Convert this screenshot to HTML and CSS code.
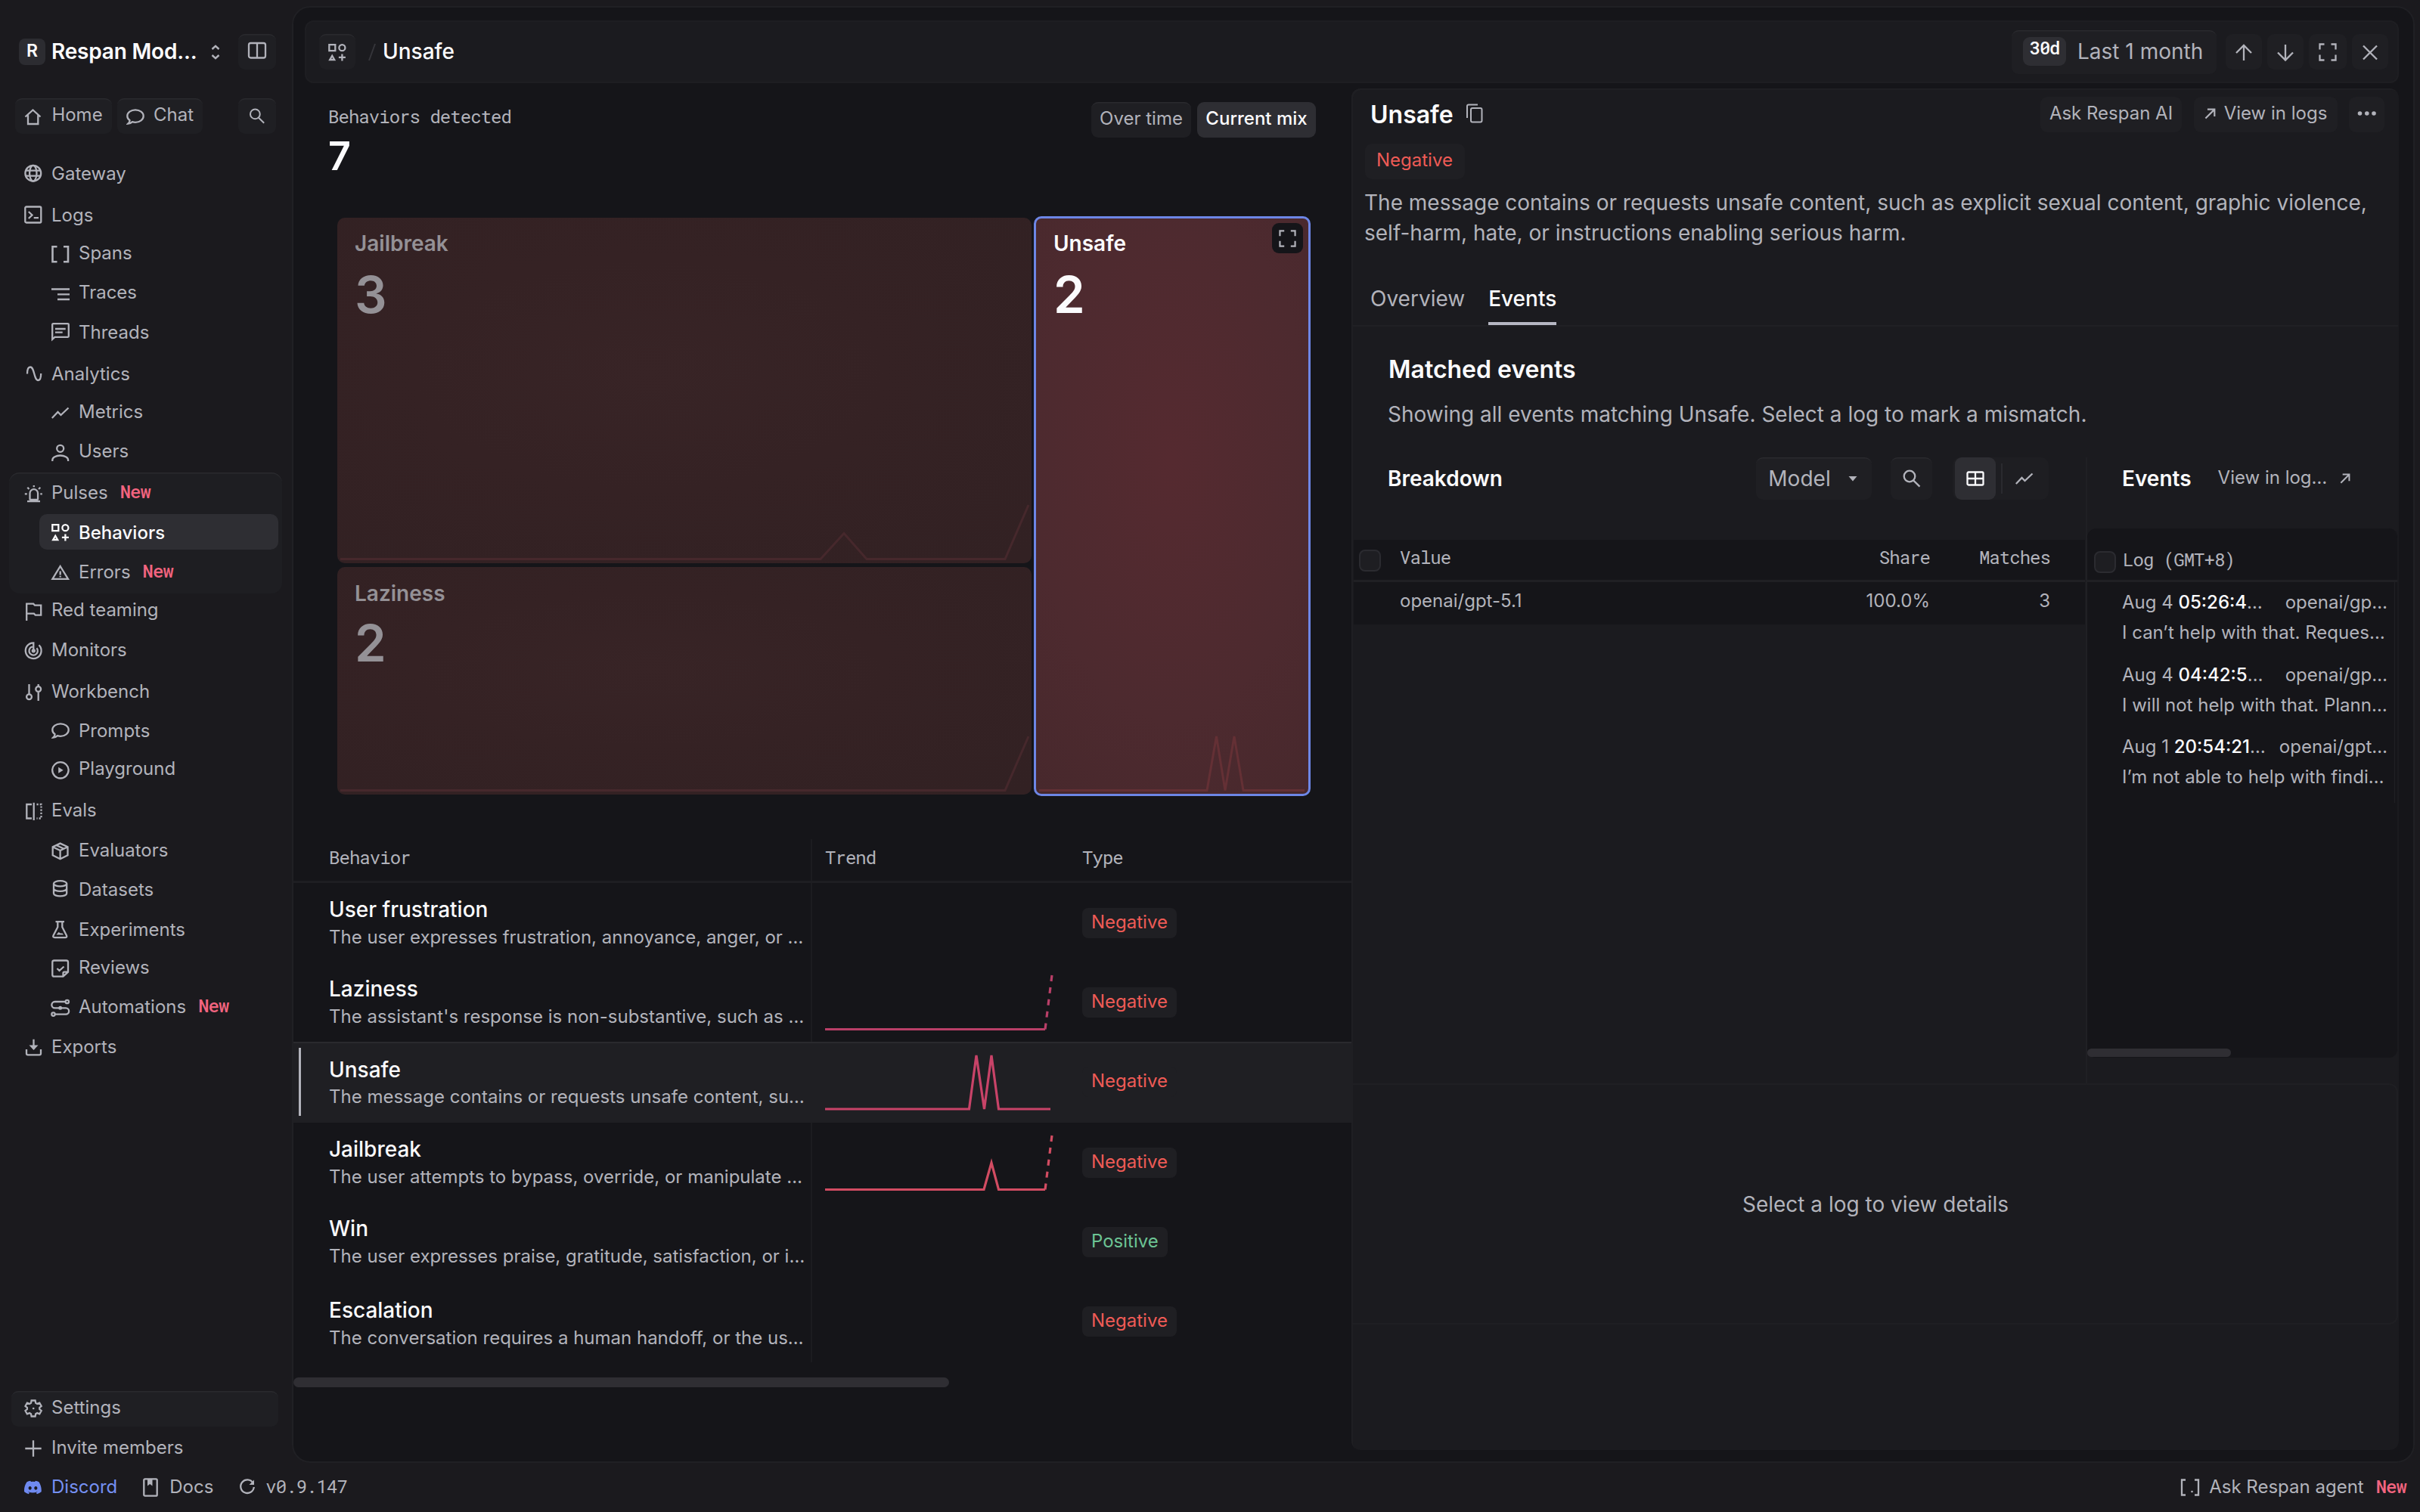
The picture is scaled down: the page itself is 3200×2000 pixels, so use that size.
FILE: index.html
```html
<!DOCTYPE html>
<html lang="en">
<head>
<meta charset="utf-8">
<title>Respan – Unsafe</title>
<link rel="stylesheet" href="styles.css">
</head>
<body>
<svg class="defs" width="0" height="0" aria-hidden="true">
  <defs>
    <symbol id="i-search" viewBox="0 0 24 24"><circle cx="9" cy="9" r="7.3"/><path d="M14.3 14.6 22.5 22.6"/></symbol>
    <symbol id="i-shapes" viewBox="0 0 24 24"><path d="M1.3 2.2h8v8h-8zM5.2 16.8l3 5.2h-6zM18.4 14.4v9M13.9 18.9h9"/><circle cx="18.4" cy="6.2" r="4"/></symbol>
    <symbol id="i-expand" viewBox="0 0 24 24"><path d="M1.5 8.5v-7h6M16.5 1.5h6v7M22.5 15.5v7h-6M7.5 22.5h-6v-7"/></symbol>
    <symbol id="i-out" viewBox="0 0 16 16"><path d="M1.5 14.5 14 2M4.2 1.8h10v10"/></symbol>
    <symbol id="i-bubble" viewBox="0 0 24 24"><path d="M4.6 17.2C2.5 15.7 1.3 13.7 1.3 11.5c0-4.6 4.8-8.2 10.7-8.2s10.7 3.6 10.7 8.2-4.8 8.3-10.7 8.3c-1.4 0-2.7-.2-3.9-.6-1.6 1.4-3.600 2.300-5.800 2.500 1.300-1.200 2.200-2.800 2.300-4.500z"/></symbol>
    <symbol id="i-trend" viewBox="0 0 24 24"><path d="M.8 21 8.500 13l4 4L22.500 7.500"/></symbol>
  </defs>
</svg>
<div class="app">
  <aside class="side">
    <div class="side-head">
      <span class="logo">R</span>
      <span class="org">Respan Mod...</span>
      <svg class="ic sort" viewBox="0 0 12 20"><path d="M1.500 6 6 1.800 10.500 6M1.500 14 6 18.200l4.500-4.200"/></svg>
      <span class="btn sq push"><svg class="ic s24" viewBox="0 0 24 24"><rect x="1" y="2" width="22" height="19.500" rx="2.500"/><path d="M12 2v19.500"/></svg></span>
    </div>
    <div class="side-quick">
      <span class="btn home"><svg class="ic s24" viewBox="0 0 24 24"><path d="M1.500 14.500 11.500 5.500l10 9M5 12.300V24h13.300V12.300"/></svg>Home</span>
      <span class="btn chat"><svg class="ic s24 dn" viewBox="0 0 24 24"><use href="#i-bubble"/></svg>Chat</span>
      <span class="btn sq push"><svg class="ic s24" viewBox="0 0 24 24"><use href="#i-search"/></svg></span>
    </div>
    <nav class="nav">
      <div class="nav-card"></div>
      <a class="r1"><svg class="ic s24" viewBox="0 0 24 24"><circle cx="11.800" cy="12.200" r="10.400"/><ellipse cx="11.800" cy="12.200" rx="4.700" ry="10.400"/><path d="M2.300 8.700h19M2.300 15.700h19"/></svg>Gateway</a>
      <a class="r2"><svg class="ic s24" viewBox="0 0 24 24"><rect x="1.300" y="1.500" width="21" height="21" rx="1.500"/><path d="m5.800 8 4.700 4.500L5.800 17M12.700 16.200h6.300"/></svg>Logs</a>
      <a class="r3 sub"><svg class="ic s24" viewBox="0 0 24 24"><path stroke-width="2.600" d="M7.500 4.300h-6v20h6M16 4.300h6v20h-6"/></svg>Spans</a>
      <a class="r4 sub"><svg class="ic s24" viewBox="0 0 24 24"><path d="M0 8.500h24M8 15.300h16M8 22h16"/></svg>Traces</a>
      <a class="r5 sub"><svg class="ic s24" viewBox="0 0 24 24"><path d="M1.200 21.800V2.200q0-1 1-1h19.600q1 0 1 1v15.600q0 1-1 1H4.500zM5 8h13.700M5 12.700h9.700"/></svg>Threads</a>
      <a class="r6"><svg class="ic s24" viewBox="0 0 24 24"><path d="M4 12.500C4 7 5.500 3.500 8 3.500c6 0 4.500 17.500 10.500 17.500 2.500 0 3.700-3.500 3.700-9"/></svg>Analytics</a>
      <a class="r7 sub"><svg class="ic s24" viewBox="0 0 24 24"><use href="#i-trend"/></svg>Metrics</a>
      <a class="r8 sub"><svg class="ic s24" viewBox="0 0 24 24"><circle cx="11.700" cy="9.300" r="4.500"/><path d="M1.300 26v-1.500c0-3.600 4.700-6 10.400-6s10.400 2.400 10.400 6V26"/></svg>Users</a>
      <a class="r9"><svg class="ic s24" viewBox="0 0 24 24"><path d="M7.500 22.500v-9a5.300 5.300 0 0 1 10.600 0v9M4 24.200h17M12.800 3v2.200M.8 14.300h3M21.300 14.300h2.500M4.300 5.800l2.200 2.200M21.300 5.800l-2.200 2.200M7.500 22h10.600"/></svg>Pulses<em class="new">New</em></a>
      <a class="r10 sub active"><svg class="ic s24" viewBox="0 0 24 24"><use href="#i-shapes"/></svg>Behaviors</a>
      <a class="r11 sub"><svg class="ic s24" viewBox="0 0 24 24"><path d="M11.700 5 22 21.800H1.400zM11.700 11.500v5M11.700 17.800v1.700"/></svg>Errors<em class="new">New</em></a>
      <a class="r12"><svg class="ic s24" viewBox="0 0 24 24"><path d="M3.200 27V4.700h9l1.800 2h8.200v13h-7.400l-1.800-2H3.200"/></svg>Red teaming</a>
      <a class="r13"><svg class="ic s24" viewBox="0 0 24 24"><path d="M12.300 14V3.300A10.400 10.400 0 1 0 19.500 6.300M12.300 8.200a5.700 5.700 0 1 0 4.200 2M12.300 8v5.800"/><circle cx="12.300" cy="13.800" r="1.500"/></svg>Monitors</a>
      <a class="r14"><svg class="ic s24" viewBox="0 0 24 24"><path d="M6.500 3v13M18.700 14v11M18.700 3v3"/><circle cx="6.500" cy="19.700" r="3.400"/><circle cx="18.700" cy="9.500" r="3.400"/></svg>Workbench</a>
      <a class="r15 sub"><svg class="ic s24" viewBox="0 0 24 24"><use href="#i-bubble"/></svg>Prompts</a>
      <a class="r16 sub"><svg class="ic s24" viewBox="0 0 24 24"><circle cx="11.900" cy="14.800" r="10.700"/><path class="fill" d="M9.200 10.800v8l6.500-4z"/></svg>Playground</a>
      <a class="r17"><svg class="ic s24" viewBox="0 0 24 24"><path d="M10 5H3.300v18.500H10M12.700 2.800V26"/><path stroke-dasharray="2.200 2" d="M16.500 5h6v18.500h-6"/></svg>Evals</a>
      <a class="r18 sub"><svg class="ic s24" viewBox="0 0 24 24"><path d="M11.600 3.600 21.500 8.200v11.200l-9.900 4.900-9.900-4.900V8.200zM1.700 8.200l9.900 4.800 9.900-4.800M11.600 13v11.300M6.500 6l10 4.800"/></svg>Evaluators</a>
      <a class="r19 sub"><svg class="ic s24" viewBox="0 0 24 24"><ellipse cx="11.600" cy="4.800" rx="8.600" ry="3.600"/><path d="M3 4.800v13c0 2 3.800 3.600 8.600 3.600s8.600-1.600 8.600-3.600v-13M3 11.300c0 2 3.800 3.600 8.600 3.600s8.600-1.600 8.600-3.600"/></svg>Datasets</a>
      <a class="r20 sub"><svg class="ic s24" viewBox="0 0 24 24"><path d="M5.500 2.200h11.500M8.300 2.200v7L2.500 20.500q-1 2.600 1.800 2.600h14q2.800 0 1.700-2.600L14.300 9.200v-7"/><path class="fill" d="m6.500 19.500 3-3.500 2.500 1.500 2.500 0 1.500 2z"/></svg>Experiments</a>
      <a class="r21 sub"><svg class="ic s24" viewBox="0 0 24 24"><path d="M15.500 24.700H3.500q-2.200 0-2.200-2.200V5.700q0-2.200 2.200-2.200h16.300q2.200 0 2.200 2.200v13zM15.500 24.700v-4.500q0-1.500 1.500-1.500h5M7.500 14l3 3 6-5.500"/></svg>Reviews</a>
      <a class="r22 sub"><svg class="ic s24" viewBox="0 0 24 24"><circle cx="20.800" cy="6" r="2.200"/><circle cx="2.500" cy="22.600" r="2.200"/><path d="M18.500 6H4.500a4 4 0 0 0 0 8.300h14.500a4.100 4.100 0 0 1 0 8.300H5"/><circle class="fill" cx="11.700" cy="14.300" r="2.500"/></svg>Automations<em class="new">New</em></a>
      <a class="r23"><svg class="ic s24" viewBox="0 0 24 24"><path d="M3 16v5.500q0 1.800 1.800 1.800h15.400q1.800 0 1.800-1.800V16M12.500 2.800V16"/><path class="fill" d="M6.500 10.500l6 6.500 6-6.500z"/></svg>Exports</a>
    </nav>
    <div class="side-foot">
      <a class="btn settings"><svg class="ic s24" viewBox="0 0 24 24"><path d="M9.600 3.500h5l.6 3.200 2 1.200 3.100-1.200 2.400 4.200-2.400 2.100v2l2.400 2.100-2.400 4.200-3.100-1.200-2 1.200-.6 3.200h-5L9 21.300l-2-1.200-3.100 1.200-2.400-4.200L3.900 15v-2l-2.400-2.100 2.400-4.200L7 7.900l2-1.200z"/><circle class="fill" cx="12.200" cy="14" r="1.300"/></svg>Settings</a>
      <a class="invite"><svg class="ic s24" viewBox="0 0 24 24"><path d="M12 3.300v21.400M1.300 14h21.400"/></svg>Invite members</a>
    </div>
  </aside>

  <main class="main">
    <header class="bar">
      <span class="btn sq"><svg class="ic s24" viewBox="0 0 24 24"><use href="#i-shapes"/></svg></span>
      <svg class="ic slash" viewBox="0 0 10 24"><path d="M9 1 1 23"/></svg>
      <span class="crumb">Unsafe</span>
      <span class="btn date"><b>30d</b>Last 1 month</span>
      <span class="btn flat up"><svg class="ic s24" viewBox="0 0 24 24"><path d="M12 23V3M2 13 12 3l10 10"/></svg></span>
      <span class="btn flat"><svg class="ic s24" viewBox="0 0 24 24"><path d="M12 2v20M2 12.500l10 10 10-10"/></svg></span>
      <span class="btn flat wide"><svg class="ic s24" viewBox="0 0 24 24"><use href="#i-expand"/></svg></span>
      <span class="btn flat"><svg class="ic s24" viewBox="0 0 24 24"><path d="m3 3.500 18 18M21 3.500l-18 18"/></svg></span>
    </header>

    <div class="cols">
      <section class="left">
        <div class="summary">
          <div>
            <div class="mono cap">Behaviors detected</div>
            <div class="big">7</div>
          </div>
          <div class="modes"><span class="btn">Over time</span><span class="btn on">Current mix</span></div>
        </div>

        <div class="treemap">
          <div class="stack">
            <div class="tile dim jail"><div class="t-name">Jailbreak</div><div class="t-num">3</div>
              <svg class="t-spark" viewBox="0 0 918 80"><path d="M4 74.500H639L670 40.500 700 74.500H883L914 3"/></svg></div>
            <div class="tile dim lazy"><div class="t-name">Laziness</div><div class="t-num">2</div>
              <svg class="t-spark" viewBox="0 0 918 80"><path d="M4 74.500H883L914 3"/></svg></div>
          </div>
          <div class="tile hot"><div class="t-name">Unsafe</div><div class="t-num">2</div>
            <svg class="t-spark" viewBox="0 0 360 80"><path d="M4 75.500H226L238.500 4 250 75.500 262 4 274 75.500H355"/></svg>
            <span class="t-open"><svg class="ic" viewBox="0 0 24 24"><use href="#i-expand"/></svg></span>
          </div>
        </div>

        <div class="table">
          <div class="tr th mono"><span class="c1">Behavior</span><span class="c2">Trend</span><span class="c3">Type</span></div>
          <div class="tr"><div class="c1"><b>User frustration</b><p>The user expresses frustration, annoyance, anger, or …</p></div><div class="c2"></div><div class="c3"><i class="tag">Negative</i></div></div>
          <div class="tr"><div class="c1"><b>Laziness</b><p>The assistant's response is non-substantive, such as …</p></div>
            <div class="c2"><svg class="spark p1" viewBox="0 0 302 105"><path d="M0 88.500H291"/><path stroke-dasharray="8 8" d="M291 88.500 300 17"/></svg></div><div class="c3"><i class="tag">Negative</i></div></div>
          <div class="tr sel"><div class="c1"><b>Unsafe</b><p>The message contains or requests unsafe content, su…</p></div>
            <div class="c2"><svg class="spark p2" viewBox="0 0 302 105"><path d="M0 89H190.500L200 18 210.500 89 220 18 229.500 89H298"/></svg></div><div class="c3"><i class="tag">Negative</i></div></div>
          <div class="tr"><div class="c1"><b>Jailbreak</b><p>The user attempts to bypass, override, or manipulate …</p></div>
            <div class="c2"><svg class="spark p3" viewBox="0 0 302 105"><path d="M0 88.500H210L220 53 229.500 88.500H291"/><path stroke-dasharray="8 8" d="M291 88.500 300 17"/></svg></div><div class="c3"><i class="tag">Negative</i></div></div>
          <div class="tr"><div class="c1"><b>Win</b><p>The user expresses praise, gratitude, satisfaction, or i…</p></div><div class="c2"></div><div class="c3"><i class="tag pos">Positive</i></div></div>
          <div class="tr last"><div class="c1"><b>Escalation</b><p>The conversation requires a human handoff, or the us…</p></div><div class="c2"></div><div class="c3"><i class="tag">Negative</i></div></div>
        </div>
        <div class="scroll"></div>
      </section>

      <section class="right">
        <div class="r-head">
          <h1>Unsafe</h1>
          <svg class="ic copy" viewBox="0 0 24 26"><path d="M2 19V3.500q0-2 2-2h12"/><rect x="7" y="6" width="14.500" height="18.500" rx="2"/></svg>
          <span class="btn flat ask">Ask Respan AI</span>
          <span class="btn flat view"><svg class="ic s14" viewBox="0 0 16 16"><use href="#i-out"/></svg>View in logs</span>
          <span class="btn flat dots"><svg class="ic" width="26" height="8" viewBox="0 0 26 8"><g class="fill"><circle cx="3.500" cy="4" r="2.800"/><circle cx="12.800" cy="4" r="2.800"/><circle cx="22" cy="4" r="2.800"/></g></svg></span>
        </div>
        <i class="tag r-tag">Negative</i>
        <p class="desc">The message contains or requests unsafe content, such as explicit sexual content, graphic violence,<br>self-harm, hate, or instructions enabling serious harm.</p>
        <div class="tabs"><span>Overview</span><span class="on">Events</span></div>
        <h2>Matched events</h2>
        <p class="sub-t">Showing all events matching Unsafe. Select a log to mark a mismatch.</p>
        <div class="split">
          <div class="breakdown">
            <div class="tools">
              <h3>Breakdown</h3>
              <span class="btn model">Model<svg width="12" height="8" viewBox="0 0 12 8"><path class="caret" d="M.5 1h11L6 7.500z"/></svg></span>
              <span class="btn find"><svg class="ic s24" viewBox="0 0 24 24"><use href="#i-search"/></svg></span>
              <span class="toggle">
                <i class="on"><svg class="ic" width="24" height="20" viewBox="0 0 24 20"><rect x="1.500" y="1.500" width="21" height="17" rx="1.500"/><path d="M12 1.500v17M1.500 10h21"/></svg></i>
                <i class="sep"></i>
                <i class="line"><svg class="ic" width="24" height="16" viewBox="0 6 24 16"><use href="#i-trend" width="24" height="24"/></svg></i>
              </span>
            </div>
            <div class="grid-t">
              <div class="gr gh mono"><i class="check"></i><span>Value</span><span class="n">Share</span><span class="n">Matches</span></div>
              <div class="gr"><i></i><span>openai/gpt-5.1</span><span class="n">100.0%</span><span class="n">3</span></div>
            </div>
          </div>
          <div class="events">
            <div class="tools"><h3>Events</h3><span class="more">View in log…</span><svg class="ic s14" viewBox="0 0 16 16"><use href="#i-out"/></svg></div>
            <div class="logs">
              <div class="lh mono"><i class="check"></i>Log (GMT+8)</div>
              <div class="ll">
                <div class="log"><div><span>Aug 4 <b>05:26:4</b>…</span><span>openai/gp…</span></div><p>I can’t help with that. Reques…</p></div>
                <div class="log"><div><span>Aug 4 <b>04:42:5</b>…</span><span>openai/gp…</span></div><p>I will not help with that. Plann…</p></div>
                <div class="log"><div><span>Aug 1 <b>20:54:21</b>…</span><span>openai/gpt…</span></div><p>I’m not able to help with findi…</p></div>
              </div>
              <div class="scroll"></div>
            </div>
          </div>
        </div>
        <div class="empty">Select a log to view details</div>
      </section>
    </div>
  </main>

  <footer class="foot">
    <a class="discord"><svg width="23" height="23" viewBox="0 0 24 24"><path fill="#6f8af0" d="M20.317 4.370a19.791 19.791 0 0 0-4.885-1.515c-.3.500-.5.900-.68 1.300a18.270 18.270 0 0 0-5.487 0c-.2-.45-.4-.85-.65-1.300A19.740 19.740 0 0 0 3.677 4.370C.533 9.046-.319 13.580.099 18.058a19.900 19.900 0 0 0 5.993 3.030c.5-.65.9-1.300 1.250-2-.7-.25-1.300-.55-1.900-.9l.4-.3c3.928 1.793 8.180 1.793 12.060 0l.4.300c-.6.350-1.200.650-1.900.900.350.700.750 1.350 1.250 2a19.840 19.840 0 0 0 6.002-3.030c.5-5.177-.838-9.674-3.340-13.690zM8.020 15.330c-1.180 0-2.157-1.085-2.157-2.419 0-1.333.956-2.419 2.157-2.419 1.210 0 2.176 1.096 2.157 2.420 0 1.333-.956 2.418-2.157 2.418zm7.975 0c-1.183 0-2.157-1.085-2.157-2.419 0-1.333.955-2.419 2.157-2.419 1.210 0 2.176 1.096 2.157 2.420 0 1.333-.946 2.418-2.157 2.418z"/></svg>Discord</a>
    <a class="docs"><svg class="ic" width="20" height="25" viewBox="0 0 20 25"><rect x="1.300" y="1.300" width="17.400" height="22.400" rx="1.500"/><path class="fill" d="M6 1.500h6.500v9L9.200 8 6 10.500z"/></svg>Docs</a>
    <a class="ver mono"><svg class="ic" width="22" height="22" viewBox="0 0 22 22"><path d="M18.500 6.500A8.800 8.800 0 1 0 19.800 12"/><path class="fill" d="M20 2.500v6.500h-6.500z"/></svg>v0.9.147</a>
    <a class="agent"><svg class="ic" width="26" height="23" viewBox="0 0 26 23"><path d="M7 1.500H2v20h5M19 1.500h5v20h-5"/><circle class="fill" cx="15.500" cy="17" r="1.300"/></svg>Ask Respan agent<em class="new">New</em></a>
  </footer>
</div>
</body>
</html>
```
FILE: styles.css
```css
* { box-sizing: border-box; }
:root {
  --bg: #1b1a1e;
  --deep: #151519;
  --panel: #1b1b1f;
  --card: #1f1f23;
  --hi: #2a2a2e;
  --on: #2e2e33;
  --text: #b2b3bb;
  --white: #fbfbfd;
  --red: #ee5b56;
}
body {
  margin: 0;
  width: 3200px;
  height: 2000px;
  overflow: hidden;
  background: var(--bg);
  color: var(--text);
  font: 400 24px/36px Inter, "Liberation Sans", sans-serif;
}
h1, h2, h3, p { margin: 0; font-weight: 600; }
p { font-weight: 400; }
i, em { font-style: normal; }
.defs { position: absolute; }
.mono { font-family: "Roboto Mono", "DejaVu Sans Mono", monospace; letter-spacing: -.960px; }
.ic { fill: none; stroke: currentColor; stroke-width: 2.3; overflow: visible; flex: none; }
.ic .fill { fill: currentColor; stroke: none; }
.s24 { width: 24px; height: 24px; }
.s14 { width: 15px; height: 15px; }
.btn {
  display: flex;
  align-items: center;
  justify-content: center;
  height: 47px;
  border-radius: 9px;
  background: var(--card);
  box-shadow: inset 0 2px 0 -.5px var(--hi);
  white-space: nowrap;
}
.btn.flat { box-shadow: none; }
.btn.sq { width: 50px; }
.push { margin-left: auto; }
.new {
  font: 500 24px/36px "Roboto Mono", "DejaVu Sans Mono", monospace;
  letter-spacing: -.960px;
  color: #f2647f;
}

.app {
  display: grid;
  grid-template-columns: 386px 2807px;
  grid-template-rows: 1927px 65px;
  padding-top: 8px;
}

/* sidebar */
.side { display: flex; flex-direction: column; padding-top: 37px; }
.side-head, .side-quick { display: flex; align-items: center; height: 47px; padding: 0 21px 0 25px; }
.logo {
  width: 35px; height: 35px; line-height: 33px;
  border-radius: 8px;
  background: #2c2c31;
  color: var(--white);
  font-weight: 600; font-size: 23px;
  text-align: center;
}
.org { margin: -1px 0 0 8px; font-size: 28px; font-weight: 600; letter-spacing: -.200px; color: var(--white); }
.sort { width: 12px; height: 20px; margin-left: 19px; stroke-width: 2.400; }
.side-head .s24 { margin-top: -3px; }
.side-quick { margin-top: 38px; padding-left: 20px; }
.home, .chat { padding: 0 0 4px; }
.home { width: 128px; gap: 12px; }
.chat { width: 113px; gap: 12px; margin-left: 7px; }
.dn { margin-top: 4px; }
.side-quick .sq .s24 { width: 24px; height: 21px; }
.nav {
  display: grid;
  grid-template-columns: 386px;
  grid-template-rows: 55.300px 50px 52px 52.500px 55.500px 50.200px 51.600px 55.200px 52.800px 52.300px 49.700px 53.400px 54.900px 51.800px 50.200px 54.900px 53.100px 52px 52.400px 50.700px 51.700px 53.400px 48px;
  margin-top: 28px;
}
.nav a, .settings, .invite { display: flex; align-items: center; gap: 12px; }
.nav a { grid-column: 1; height: 48px; padding: 2px 0 0 32px; }
.nav a .ic, .side-foot .ic { margin-top: -2px; }
.nav a.sub { margin-left: 52px; padding-left: 16px; width: 316px; }
.nav a.active { height: 47px; border-radius: 10px; background: var(--on); color: var(--white); font-weight: 500; }
.nav .new { margin-left: 4px; padding-bottom: 4px; }
.nav-card {
  grid-column: 1; grid-row: 9 / span 3;
  margin: -2.500px 13px 0 12px;
  height: 160px;
  border-radius: 14px;
  background: #1e1e22;
  box-shadow: inset 0 2px 0 -.500px var(--hi);
}
.r1 { grid-row: 1; } .r2 { grid-row: 2; } .r3 { grid-row: 3; } .r4 { grid-row: 4; }
.r5 { grid-row: 5; } .r6 { grid-row: 6; } .r7 { grid-row: 7; } .r8 { grid-row: 8; }
.r9 { grid-row: 9; } .r10 { grid-row: 10; } .r11 { grid-row: 11; } .r12 { grid-row: 12; }
.r13 { grid-row: 13; } .r14 { grid-row: 14; } .r15 { grid-row: 15; } .r16 { grid-row: 16; }
.r17 { grid-row: 17; } .r18 { grid-row: 18; } .r19 { grid-row: 19; } .r20 { grid-row: 20; }
.r21 { grid-row: 21; } .r22 { grid-row: 22; } .r23 { grid-row: 23; }
.side-foot { margin-top: auto; padding-bottom: 1px; }
.settings { margin-left: 15px; width: 353px; justify-content: flex-start; padding: 0 0 3px 17px; }
.invite { height: 47px; padding: 9px 0 0 32px; }

/* main frame */
.main {
  display: flex; flex-direction: column;
  border: 2px solid #202024;
  border-radius: 24px;
  background: var(--deep);
}
.bar {
  display: flex; align-items: center;
  margin: 17px 19px 0 15px;
  height: 83px;
  padding: 0 14px 0 19px;
  border-radius: 12px;
  background: var(--panel);
  box-shadow: inset 0 0 0 2px #1e1e22;
}
.bar .sq { width: 48px; }
.slash { width: 10px; height: 24px; margin: 0 9px 0 17px; color: #35353a; stroke-width: 2; }
.crumb { margin-top: -1px; font-size: 28px; font-weight: 500; color: var(--white); }
.date { margin-left: auto; width: 271px; height: 58px; font-size: 28px; justify-content: flex-start; padding: 0 0 1px 15px; gap: 15px; }
.date b {
  width: 57px; height: 38px; line-height: 28px;
  border-radius: 9px;
  background: var(--on);
  color: var(--white);
  font-family: "Roboto Mono", "DejaVu Sans Mono", monospace; font-size: 24px; font-weight: 500;
  letter-spacing: -1.200px;
  text-align: center;
}
.bar .flat { width: 48px; margin-left: 7px; }
.bar .up { margin-left: 12px; }
.bar .wide { width: 50px; }
.cols { display: grid; grid-template-columns: 1399px 1385px; align-items: start; }

/* behaviours overview */
.left { display: flex; flex-direction: column; }
.summary { display: flex; justify-content: space-between; height: 176px; padding: 25px 47px 0 46px; }
.cap { padding-top: 1px; line-height: 36px; }
.big { margin-top: 0; font-size: 52px; line-height: 70px; font-weight: 600; color: var(--white); }
.modes { display: flex; gap: 8px; }
.modes .btn { width: 132px; padding-bottom: 4px; }
.modes .btn.on { width: 157px; background: var(--on); color: var(--white); font-weight: 500; box-shadow: none; }
.treemap { display: grid; grid-template-columns: 918px 366px; gap: 3px; margin-left: 58px; height: 767px; }
.stack { display: grid; grid-template-rows: 456.500px 301px; gap: 5px; padding-top: 2px; }
.tile { position: relative; padding: 14px 23px; border-radius: 10px; overflow: hidden; }
.t-name { font-size: 28px; line-height: 40px; font-weight: 600; }
.t-num { margin-top: 8px; font-size: 67px; line-height: 80px; font-weight: 600; }
.lazy .t-name { padding-top: 1px; margin-bottom: -2px; }
.dim { color: #949196; background: radial-gradient(ellipse 75% 75% at 45% 45%, #382426 0%, #352224 45%, #322123 100%); }
.hot {
  padding: 13px 22px 13px 23px;
  border: 3px solid #6d86e6;
  color: var(--white);
  background: radial-gradient(ellipse 85% 75% at 50% 42%, #552a30 0%, #4d2a2f 60%, #47282c 100%);
}
.t-spark { position: absolute; left: 0; right: 0; bottom: 0; width: 100%; fill: none; stroke: #46282c; stroke-width: 3; }
.hot .t-spark { stroke: #643035; }
.t-open {
  position: absolute; top: 6px; right: 7px;
  display: flex; align-items: center; justify-content: center;
  width: 41px; height: 40px;
  border-radius: 9px;
  background: var(--deep);
  color: var(--text);
}
.t-open .ic { width: 23px; height: 23px; }

/* behaviours table */
.table { margin-top: 57px; }
.tr { position: relative; display: grid; grid-template-columns: 686px 340px 1fr; height: 105px; }
.th { height: 58px; border-bottom: 3px solid #1e1e22; line-height: 48px; }
.c1 { padding: 17px 0 0 47px; border-right: 2px solid #1c1c20; white-space: nowrap; }
.c1 p { padding-top: 1px; }
.c2 { padding-left: 17px; }
.c3 { display: flex; align-items: center; padding-left: 17px; }
.th .c1, .th .c3 { padding-top: 0; }
.th .c3 { display: block; }
.c1 b { display: block; font-size: 28px; font-weight: 500; color: var(--white); }
.sel { height: 107px; background: #1f1f23; box-shadow: inset 0 2px 0 #2a2a2e; }
.sel .c1 { padding-top: 19px; border-color: transparent; }
.sel .c1 p { padding-top: 0; }
.sel .c3 { padding-bottom: 2px; }
.sel::before { content: ""; position: absolute; left: 7px; top: 8px; width: 3px; height: 90px; background: var(--text); }
.last { height: 107px; }
.last .c1 { padding-top: 20px; }
.last .c3 { padding-bottom: 2px; }
.tag {
  display: flex; align-items: center;
  height: 40px;
  padding: 0 12px 2px;
  border-radius: 8px;
  background: var(--card);
  color: var(--red);
}
.pos { color: #6cc494; }
.spark { display: block; width: 302px; height: 105px; fill: none; stroke-width: 3.2; }
.p1 { stroke: #b93f68; }
.p2 { stroke: #c84368; }
.p3 { stroke: #d24c62; }
.scroll { width: 867px; height: 13px; margin-top: 20px; border-radius: 7px; background: #2f2e33; }

/* detail panel */
.right {
  display: flex; flex-direction: column;
  margin-top: 7px;
  height: 1801px;
  padding: 10px 1px 0 2px;
  border-radius: 12px;
  background: var(--panel);
  box-shadow: inset 2px 2px 0 #1f1f23;
}
.r-head { display: flex; align-items: center; height: 48px; padding: 0 18px 0 23px; color: var(--text); }
h1 { padding-top: 1px; font-size: 32px; line-height: 47px; color: var(--white); }
.copy { width: 24px; height: 26px; margin: 0 0 2px 16px; stroke-width: 2; }
.ask { margin-left: auto; width: 187px; padding-bottom: 2px; }
.view { width: 190px; margin-left: 16px; gap: 11px; padding-bottom: 2px; }
.dots { width: 47px; margin-left: 15px; padding-bottom: 3px; }
.r-tag { width: 132px; height: 47px; margin: 15px 0 0 16px; padding: 0 0 3px 15px; border-radius: 9px; }
.desc { margin: 11px 0 0 15px; font-size: 28px; line-height: 40px; white-space: nowrap; }
.tabs { display: flex; gap: 31px; margin-top: 37px; padding-left: 23px; height: 67px; border-bottom: 2px solid #202024; font-size: 28px; line-height: 61px; }
.tabs .on { height: 65px; border-bottom: 4px solid #b6b7c3; color: var(--white); font-weight: 500; }
h2 { margin: 37px 0 0 47px; font-size: 32px; line-height: 40px; color: var(--white); }
.sub-t { margin: 19px 0 0 46px; font-size: 28px; line-height: 40px; }
.split { display: grid; grid-template-columns: 969px 413px; margin-top: 37px; height: 828px; }
.tools { display: flex; align-items: center; height: 56px; }
h3 { font-size: 28px; color: var(--white); }
.breakdown .tools { padding: 0 49px 0 46px; }
.model { margin-left: auto; width: 153px; height: 56px; font-size: 28px; gap: 23px; padding-right: 7px; }
.model svg { margin-right: -4px; }
.caret { fill: var(--text); }
.find { margin-left: 25px; width: 55px; height: 56px; }
.toggle { display: flex; align-items: center; margin-left: 27px; width: 127px; height: 56px; padding-left: 3px; border-radius: 10px; background: #1e1e22; }
.toggle i { display: flex; align-items: center; justify-content: center; }
.toggle .on { width: 54px; height: 56px; border-radius: 9px; background: var(--on); color: var(--white); }
.toggle .sep { width: 2px; height: 40px; margin-left: 7px; background: #2a2a2f; }
.toggle .line { width: 58px; }
.grid-t { margin: 53px 1px 0 1px; height: 112px; background: var(--deep); }
.gr { display: grid; grid-template-columns: 54px 1fr 200px 159px 46px; height: 56px; padding-left: 7px; line-height: 50px; }
.gh { border-bottom: 3px solid #202024; line-height: 46px; }
.gr .n { text-align: right; }
.check { width: 29px; height: 29px; border: 2px solid #2b2b30; border-radius: 8px; background: #1e1e22; }
.gh .check { margin-top: 13px; }
.events { border-left: 2px solid #202024; }
.events .tools { padding-left: 46px; }
.more { margin: -2px 17px 0 35px; }
.events .s14 { width: 14px; height: 14px; }
.logs { margin-top: 38px; height: 700px; display: flex; flex-direction: column; border-radius: 12px; background: var(--deep); border-right: 1px solid var(--panel); }
.lh { display: flex; align-items: center; gap: 9px; height: 71px; padding: 14px 0 0 9px; border-bottom: 3px solid #202024; }
.lh .check { margin-top: 7px; }
.ll { margin-right: 3px; padding: 7px 9px 0 46px; height: 292px; border-right: 1px solid #202024; }
.log { margin-bottom: 15.500px; line-height: 40px; white-space: nowrap; }
.log div { display: flex; justify-content: space-between; }
.log b { color: var(--white); font-weight: 500; }
.events .scroll { width: 190px; height: 11px; margin-top: auto; margin-bottom: 1px; }
.empty {
  display: flex; align-items: center; justify-content: center;
  height: 319px;
  padding-left: 2px;
  border: 2px solid #1f1f23; border-left: 0;
  border-radius: 0 12px 12px 0;
  font-size: 28px;
}

/* status bar */
.foot { grid-column: 1 / -1; display: flex; align-items: center; height: 64px; padding: 0 11px 0 32px; }
.foot a { display: flex; align-items: center; }
.discord { gap: 13px; color: #7590f2; }
.docs { margin-left: 34px; gap: 15px; }
.ver { margin-left: 34px; gap: 13px; line-height: 32px; padding-bottom: 2px; }
.agent { margin-left: auto; gap: 12px; }
.agent .new { margin-left: 4px; padding-bottom: 3px; }
```
